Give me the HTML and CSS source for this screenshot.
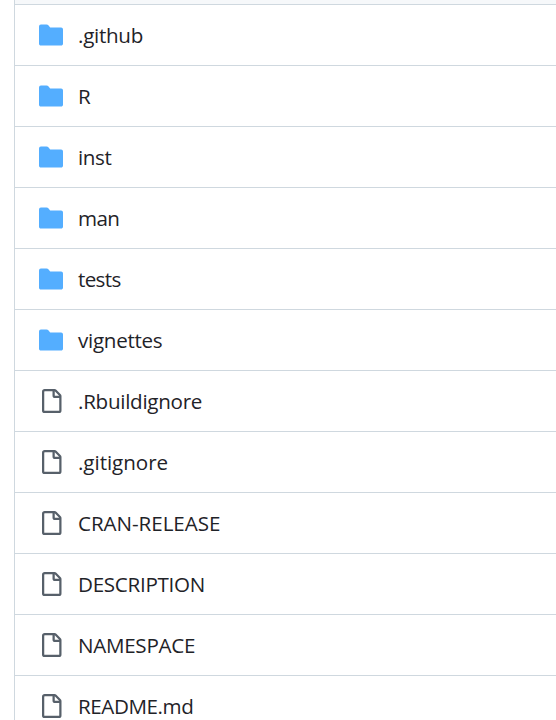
FILE: index.html
```html
<!DOCTYPE html>
<html lang="en">
<head>
<meta charset="utf-8">
<title>Files</title>
<link rel="stylesheet" href="styles.css">
</head>
<body>
<svg class="defs" aria-hidden="true">
<symbol id="folder" viewBox="0 0 16 16"><path d="M1.25 1A1.25 1.25 0 0 0 0 2.25v11.5C0 14.44.56 15 1.25 15h13.5c.69 0 1.25-.56 1.25-1.25v-9.5C16 3.56 15.44 3 14.75 3H7.5a.25.25 0 0 1-.2-.1l-.9-1.2C6.07 1.26 5.55 1 5 1H1.25Z"/></symbol>
<symbol id="file" viewBox="0 0 16 16"><path d="M2 1.75C2 .784 2.784 0 3.75 0h6.586c.464 0 .909.184 1.237.513l2.914 2.914c.329.328.513.773.513 1.237v9.586A1.75 1.75 0 0 1 13.25 16h-9.5A1.75 1.75 0 0 1 2 14.25Zm1.75-.25a.25.25 0 0 0-.25.25v12.5c0 .138.112.25.25.25h9.5a.25.25 0 0 0 .25-.25V6h-2.75A1.75 1.75 0 0 1 9 4.25V1.5Zm6.75.062V4.25c0 .138.112.25.25.25h2.688l-.011-.013-2.914-2.914-.013-.011Z"/></symbol>
</svg>
<main class="files">
<div class="head"></div>
<ul class="list">
<li class="row"><svg class="icon folder"><use href="#folder"/></svg><span class="name snug">.github</span></li>
<li class="row"><svg class="icon folder"><use href="#folder"/></svg><span class="name">R</span></li>
<li class="row"><svg class="icon folder"><use href="#folder"/></svg><span class="name tight">inst</span></li>
<li class="row"><svg class="icon folder"><use href="#folder"/></svg><span class="name tighter">man</span></li>
<li class="row"><svg class="icon folder"><use href="#folder"/></svg><span class="name tighter">tests</span></li>
<li class="row"><svg class="icon folder"><use href="#folder"/></svg><span class="name snug">vignettes</span></li>
<li class="row"><svg class="icon file"><use href="#file"/></svg><span class="name snug">.Rbuildignore</span></li>
<li class="row"><svg class="icon file"><use href="#file"/></svg><span class="name">.gitignore</span></li>
<li class="row"><svg class="icon file"><use href="#file"/></svg><span class="name">CRAN-RELEASE</span></li>
<li class="row"><svg class="icon file"><use href="#file"/></svg><span class="name snug">DESCRIPTION</span></li>
<li class="row"><svg class="icon file"><use href="#file"/></svg><span class="name snug">NAMESPACE</span></li>
<li class="row"><svg class="icon file"><use href="#file"/></svg><span class="name tight">README.md</span></li>
</ul>
</main>
</body>
</html>
```
FILE: styles.css
```css
body {
  margin: 0;
  height: 720px;
  overflow: hidden;
  background: #fff;
  color: #1f2328;
  font: 20.6px/30px "Segoe UI", "Open Sans", "Noto Sans", sans-serif;
}
.defs { display: none; }
.files {
  margin-left: 14px;
  border-left: 1px solid #cfd8df;
}
.head { height: 4px; background: #f6f8fa; }
.list { margin: 0; padding: 0; list-style: none; }
.row {
  display: flex;
  align-items: center;
  gap: 15px;
  height: 60px;
  padding-left: 24px;
  border-top: 1px solid #cfd8df;
}
.icon { width: 24px; height: 24px; flex: none; }
.folder { fill: #54aeff; }
.file { fill: #57606a; }
.name { white-space: nowrap; letter-spacing: -0.05px; }
.snug { letter-spacing: -0.28px; }
.tight { letter-spacing: -0.42px; }
.tighter { letter-spacing: -0.65px; }
```
